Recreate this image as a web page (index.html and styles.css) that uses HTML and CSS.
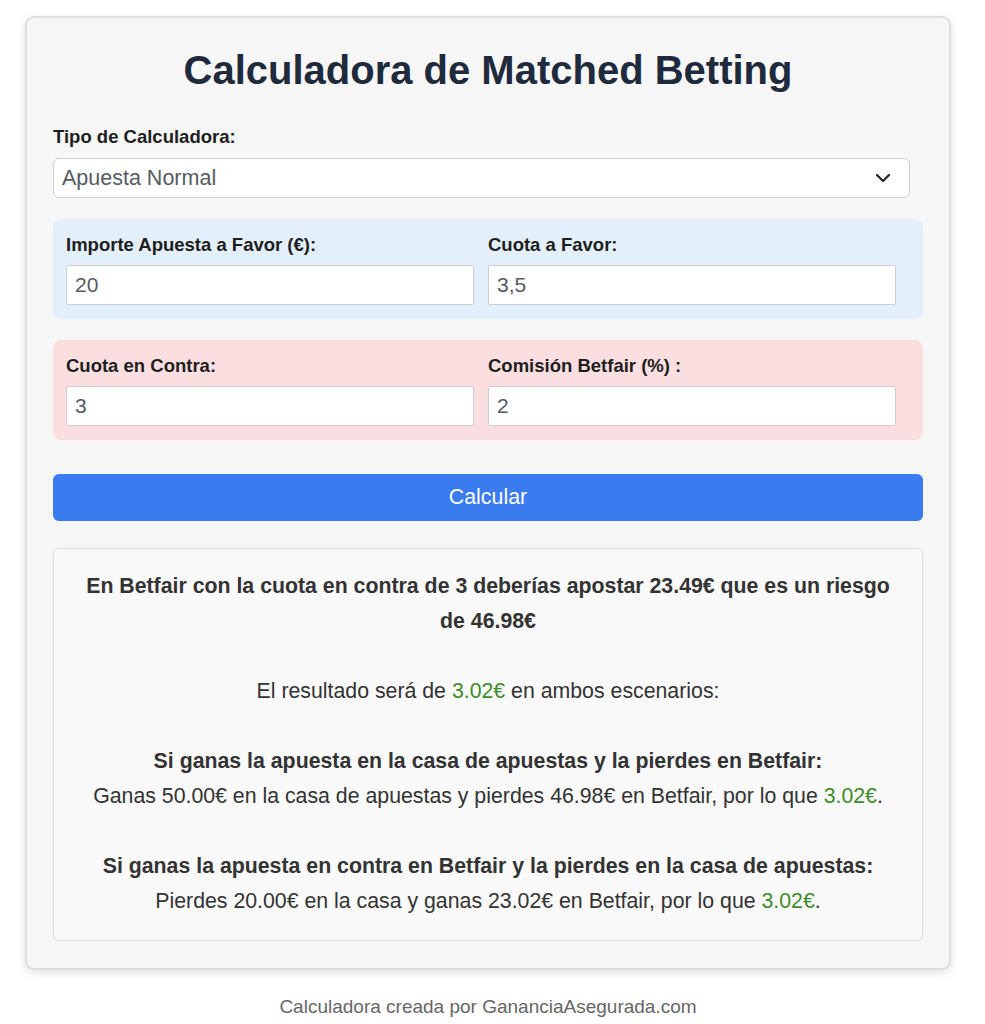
FILE: index.html
```html
<!DOCTYPE html>
<html lang="es">
<head>
<meta charset="utf-8">
<title>Calculadora de Matched Betting</title>
<link rel="stylesheet" href="styles.css">
</head>
<body>
<div class="page">
  <div class="card">
    <h1 class="title">Calculadora de Matched Betting</h1>

    <label class="label">Tipo de Calculadora:</label>
    <div class="select">
      <span class="select-text">Apuesta Normal</span>
      <svg class="chevron" width="16" height="10" viewBox="0 0 16 10"><path d="M2 2 L8 8 L14 2" fill="none" stroke="#222" stroke-width="2.2" stroke-linecap="round" stroke-linejoin="round"/></svg>
    </div>

    <div class="group group-blue">
      <div class="field">
        <label class="label">Importe Apuesta a Favor (€):</label>
        <div class="input">20</div>
      </div>
      <div class="field">
        <label class="label">Cuota a Favor:</label>
        <div class="input">3,5</div>
      </div>
    </div>

    <div class="group group-red">
      <div class="field">
        <label class="label">Cuota en Contra:</label>
        <div class="input">3</div>
      </div>
      <div class="field">
        <label class="label">Comisión Betfair (%) :</label>
        <div class="input">2</div>
      </div>
    </div>

    <button class="button">Calcular</button>

    <div class="result">
      <p class="strong">En Betfair con la cuota en contra de 3 deberías apostar 23.49€ que es un riesgo de 46.98€</p>
      <br>
      <p>El resultado será de <span class="green">3.02€</span> en ambos escenarios:</p>
      <br>
      <p class="strong">Si ganas la apuesta en la casa de apuestas y la pierdes en Betfair:</p>
      <p>Ganas 50.00€ en la casa de apuestas y pierdes 46.98€ en Betfair, por lo que <span class="green">3.02€</span>.</p>
      <br>
      <p class="strong">Si ganas la apuesta en contra en Betfair y la pierdes en la casa de apuestas:</p>
      <p>Pierdes 20.00€ en la casa y ganas 23.02€ en Betfair, por lo que <span class="green">3.02€</span>.</p>
    </div>
  </div>
  <p class="footer">Calculadora creada por GananciaAsegurada.com</p>
</div>
</body>
</html>
```

FILE: styles.css
```css
* { box-sizing: border-box; }
html, body { margin: 0; padding: 0; background: #ffffff; }
body { font-family: "Liberation Sans", Arial, sans-serif; color: #333; }

.page {
  width: 926px;
  margin-left: 25px;
  padding-top: 16px;
}

.card {
  background: #f6f6f6;
  border: 2px solid #dedede;
  border-radius: 9px;
  box-shadow: 0 3px 8px rgba(0, 0, 0, 0.12);
  padding: 20px 26px 27px 26px;
}

.title {
  margin: 9px 0 0 0;
  text-align: center;
  font-size: 40px;
  line-height: 46px;
  font-weight: bold;
  color: #1f2a3d;
}

.label {
  display: block;
  font-size: 18.5px;
  font-weight: bold;
  line-height: 22px;
  color: #1e1e1e;
  margin-bottom: 9px;
}

.title + .label { margin-top: 33px; margin-bottom: 10px; }

.select {
  width: 857px;
  height: 40px;
  background: #fff;
  border: 1px solid #cfcfcf;
  border-radius: 6px;
  display: flex;
  align-items: center;
  justify-content: space-between;
  padding: 0 18px 0 8px;
}
.select-text { font-size: 21.5px; color: #555b63; }

.group {
  margin-top: 21px;
  border-radius: 8px;
  padding: 15px 13px 14px 13px;
  display: grid;
  grid-template-columns: 408px 408px;
  column-gap: 14px;
}
.group-blue { background: #e3f0fb; }
.group-red { background: #fbdfe0; margin-top: 21px; }

.input {
  height: 40px;
  background: #fff;
  border: 1px solid #cfcfcf;
  border-radius: 2px;
  padding: 0 8px;
  display: flex;
  align-items: center;
  font-size: 21px;
  color: #555b63;
}

.button {
  display: block;
  width: 100%;
  height: 47px;
  margin-top: 34px;
  border: none;
  border-radius: 6px;
  background: #3a7bef;
  color: #fff;
  font-family: "Liberation Sans", Arial, sans-serif;
  font-size: 21.4px;
}

.result {
  margin-top: 27px;
  background: #f9f9f9;
  border: 1px solid #dcdcdc;
  border-radius: 6px;
  padding: 20px 28px 21px 28px;
  text-align: center;
  font-size: 21.3px;
  line-height: 35px;
  color: #333;
}
.result p { margin: 0; }
.result .strong { font-weight: bold; }
.green { color: #3d8c2a; }

.footer {
  margin: 26px 0 0 0;
  text-align: center;
  font-size: 19px;
  color: #666;
}
```
